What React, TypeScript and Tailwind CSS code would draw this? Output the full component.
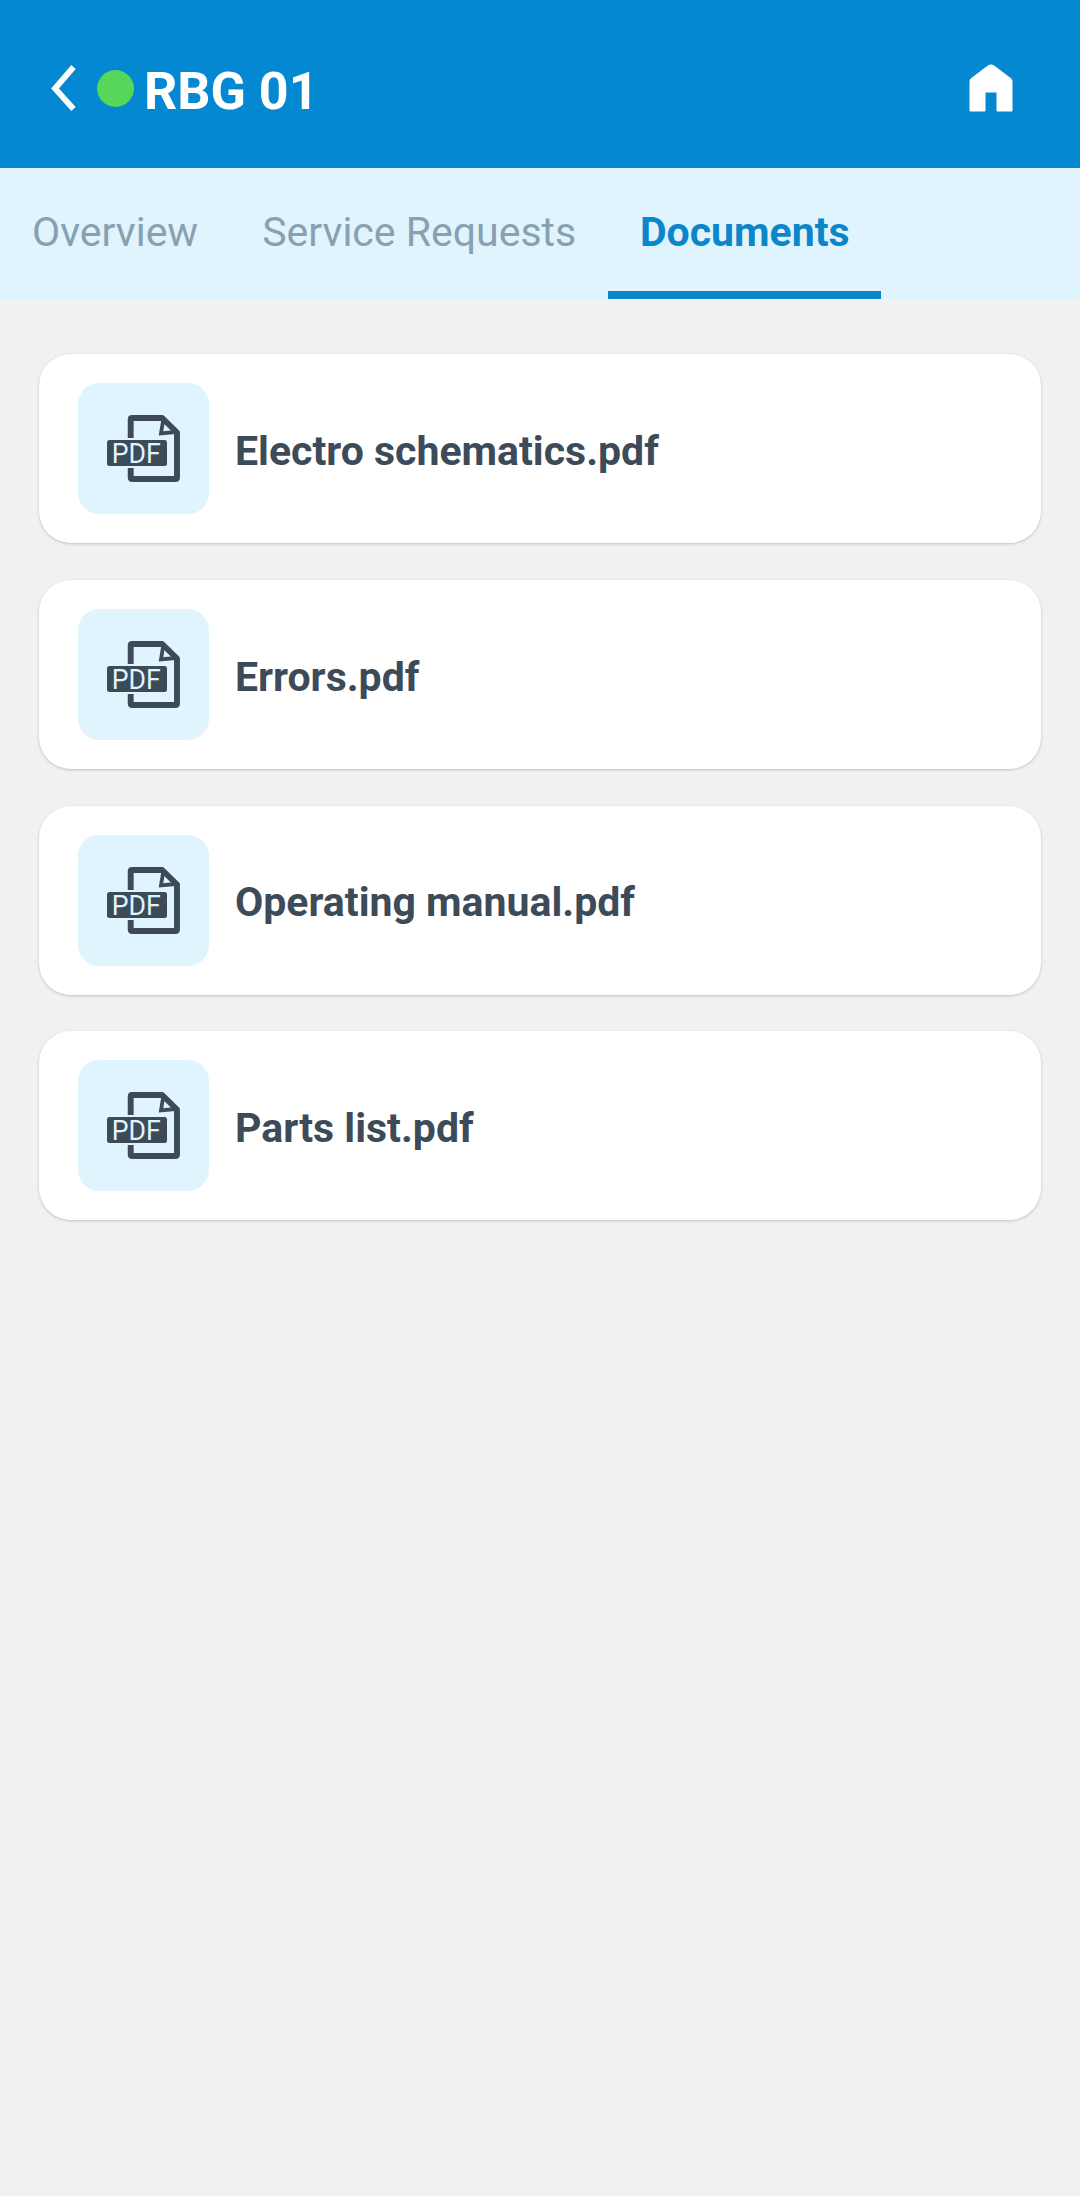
import { useState } from "react";

const tabs = ["Overview", "Service Requests", "Documents"];

const documents = [
  { id: "D001", name: "Electro schematics.pdf" },
  { id: "D002", name: "Errors.pdf" },
  { id: "D003", name: "Operating manual.pdf" },
  { id: "D004", name: "Parts list.pdf" },
];

function BackIcon() {
  return (
    <svg width="26" height="48" viewBox="0 0 26 48" fill="none">
      <path d="M23.5 3 5 24.500l18.500 20.500" stroke="#fff" strokeWidth="5.800" />
    </svg>
  );
}

function HomeIcon() {
  return (
    <svg width="44" height="48" viewBox="0 0 44 48" fill="#fff">
      <path d="M0.5 17.5Q0.5 15.5 2 14.2L18.5 1.8Q22 -0.7 25.5 1.8L42 14.2Q43.500 15.500 43.500 17.500V46.500Q43.500 47.500 42.500 47.500H28.500Q27.500 47.500 27.500 46.500V28.500H16.500V46.500Q16.500 47.500 15.500 47.500H1.500Q0.500 47.500 0.500 46.500Z" />
    </svg>
  );
}

function PdfIcon() {
  return (
    <svg width="73" height="67" viewBox="0 0 73 67" fill="none">
      <path
        d="M23.700 23V4.500Q23.700 3 25.200 3H55.200L70 17.500V62.500Q70 64 68.500 64H25.200Q23.700 64 23.700 62.500V53"
        stroke="#3d4b59"
        strokeWidth="5.900"
        strokeLinejoin="round"
      />
      <path
        d="M56.200 5 54 18.300 68.500 17"
        stroke="#3d4b59"
        strokeWidth="3.800"
      />
      <rect y="25" width="60" height="26" rx="2.500" fill="#3d4b59" />
      <text
        x="4.800"
        y="47.600"
        fill="#e0f4fe"
        fontSize="27"
        textLength="49"
        lengthAdjust="spacingAndGlyphs"
        className="font-['Roboto',sans-serif]"
      >
        PDF
      </text>
    </svg>
  );
}

export default function DocumentsPage() {
  const [activeTab, setActiveTab] = useState("Documents");

  return (
    <div className="min-h-[2196px] bg-[#f1f1f1] font-['Roboto',sans-serif]">
      <header className="flex h-[168px] items-center bg-[#0488d2] pt-2 pr-[67.5px] pl-[50px]">
        <button aria-label="Back">
          <BackIcon />
        </button>
        <span className="ml-[21px] size-[37px] rounded-full bg-[#58d65a]" />
        <h1 className="mt-[8px] ml-[10px] text-[52px] leading-none font-bold text-white">
          RBG 01
        </h1>
        <button aria-label="Home" className="ml-auto">
          <HomeIcon />
        </button>
      </header>

      <nav className="flex h-[131px] bg-[#e0f4fe]">
        {tabs.map((tab) => (
          <button
            key={tab}
            onClick={() => setActiveTab(tab)}
            className={
              tab === activeTab
                ? "border-b-8 border-[#0b86ca] px-[31.75px] pt-[6px] text-[41px] font-bold text-[#0b86ca]"
                : "border-b-8 border-transparent px-8 pt-[6px] text-[41px] text-[#87a1b1]"
            }
          >
            {tab}
          </button>
        ))}
      </nav>

      <ul className="flex flex-col gap-[36.75px] px-[39px] pt-[55px]">
        {documents.map((doc) => (
          <li
            key={doc.id}
            className="flex h-[189px] items-center rounded-[32px] bg-white px-[39px] shadow-[0_1px_3px_rgba(0,0,0,0.2)]"
          >
            <div className="flex size-[131px] items-center justify-center rounded-[21px] bg-[#e0f4fe]">
              <PdfIcon />
            </div>
            <span className="mt-[6px] ml-[26px] text-[41px] font-bold text-[#3d4b59]">
              {doc.name}
            </span>
          </li>
        ))}
      </ul>
    </div>
  );
}
